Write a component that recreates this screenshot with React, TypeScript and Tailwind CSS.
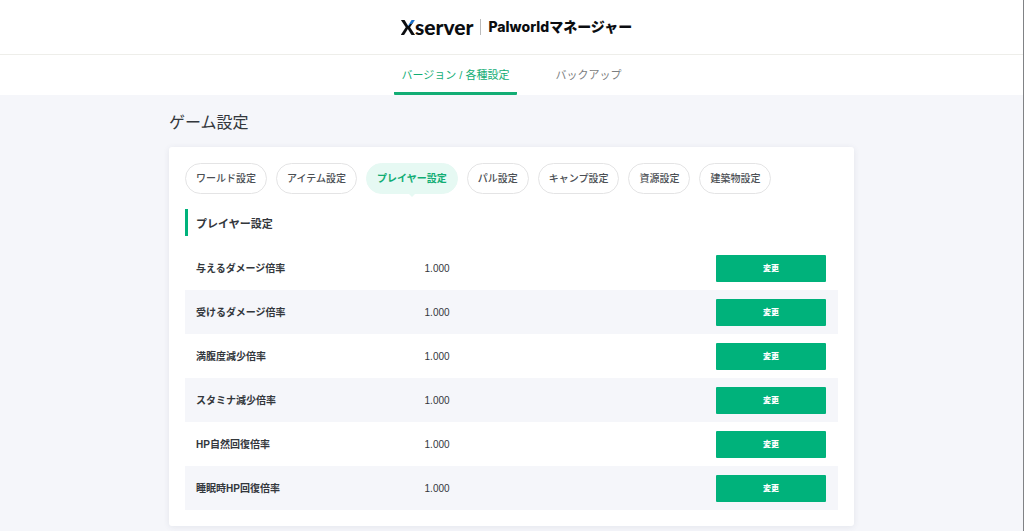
import { useState } from 'react';
import clsx from 'clsx';

interface Setting {
  id: string;
  label: string;
  value: string;
}

const NAV_ITEMS = ['バージョン / 各種設定', 'バックアップ'];

const CATEGORIES = [
  'ワールド設定',
  'アイテム設定',
  'プレイヤー設定',
  'パル設定',
  'キャンプ設定',
  '資源設定',
  '建築物設定',
];

const PLAYER_SETTINGS: Setting[] = [
  { id: 'damage-dealt', label: '与えるダメージ倍率', value: '1.000' },
  { id: 'damage-taken', label: '受けるダメージ倍率', value: '1.000' },
  { id: 'hunger', label: '満腹度減少倍率', value: '1.000' },
  { id: 'stamina', label: 'スタミナ減少倍率', value: '1.000' },
  { id: 'hp-regen', label: 'HP自然回復倍率', value: '1.000' },
  { id: 'hp-regen-sleep', label: '睡眠時HP回復倍率', value: '1.000' },
];

function Logo() {
  return (
    <a href="#" className="flex items-center gap-[7px] text-[#0b0d10]">
      <span className="font-['Lato',sans-serif] text-[21px] leading-6 font-black">
        {/* upper right arm of the X is blue */}
        <span className="bg-[conic-gradient(at_50%_50%,#1a6fc9_0_14%,#0b0d10_0)] bg-clip-text text-transparent">X</span>
        server
      </span>
      <span className="h-4 w-px bg-[#bbbbbb]"></span>
      <span className="font-['Inter','Noto_Sans_CJK_JP',sans-serif] text-[14px] leading-6 font-extrabold">
        Palworldマネージャー
      </span>
    </a>
  );
}

export default function App() {
  const [page, setPage] = useState(NAV_ITEMS[0]);
  const [category, setCategory] = useState('プレイヤー設定');

  return (
    <div
      lang="ja"
      className="min-h-screen border-r border-[#808285] bg-[#f5f6fa] pb-[5px] font-['Liberation_Sans','Noto_Sans_CJK_JP',sans-serif] text-[#33373c]"
    >
      {/* Header */}
      <header className="flex h-[55px] items-center justify-center border-b border-[#eeeeea] bg-white pl-[10px]">
        <Logo />
      </header>

      <nav className="flex h-10 justify-center gap-[30px] bg-white">
        {NAV_ITEMS.map((item) => (
          <a
            key={item}
            href="#"
            onClick={() => setPage(item)}
            className={clsx(
              'flex items-center rounded-[1px] border-b-[3px] px-2 pt-1 text-[11px]',
              item === page ? 'border-[#12ad74] text-[#12ad74]' : 'border-transparent text-[#7c7e80]'
            )}
          >
            {item}
          </a>
        ))}
      </nav>

      <main className="mx-auto w-full max-w-[685px]">
        <h1 className="pt-4 pb-3 text-[16px] leading-6">ゲーム設定</h1>

        <div className="rounded-[3px] bg-white p-4 shadow-[0_1px_6px_rgba(60,64,100,0.09)]">
          {/* Category tabs */}
          <div className="flex flex-wrap gap-[9px]">
            {CATEGORIES.map((name) => (
              <button
                key={name}
                type="button"
                onClick={() => setCategory(name)}
                className={clsx(
                  'relative h-[31px] rounded-full border px-[10px] text-[10px]',
                  name === category
                    ? 'border-[#e6f9f3] bg-[#e6f9f3] font-bold text-[#12ad74]'
                    : 'border-[#e4e4e5] bg-white font-medium text-[#4b4f54]'
                )}
              >
                {name}
                {name === category && (
                  <span className="absolute top-full left-1/2 -translate-x-1/2 border-x-4 border-t-4 border-x-transparent border-t-[#e6f9f3]"></span>
                )}
              </button>
            ))}
          </div>

          <h2 className="mt-[15px] border-l-[3px] border-[#00b27b] pt-[3px] pl-2 text-[11px] leading-6 font-bold">
            {category}
          </h2>

          {/* Settings */}
          <table className="mt-[10px] w-full table-fixed text-[10px]">
            <tbody>
              {PLAYER_SETTINGS.map((setting) => (
                <tr key={setting.id} className="h-11 even:bg-[#f5f6fa]">
                  <th scope="row" className="w-[35%] pl-[11px] text-left font-bold">
                    {setting.label}
                  </th>
                  <td className="pl-[11px]">{setting.value}</td>
                  <td className="w-[133px] pr-3 pl-[11px]">
                    <button
                      type="button"
                      aria-label={`${setting.label}を変更`}
                      className="block h-[27px] w-full rounded-[1px] bg-[#00b27b] pt-px text-[8px] font-black text-white"
                    >
                      変更
                    </button>
                  </td>
                </tr>
              ))}
            </tbody>
          </table>
        </div>
      </main>
    </div>
  );
}
